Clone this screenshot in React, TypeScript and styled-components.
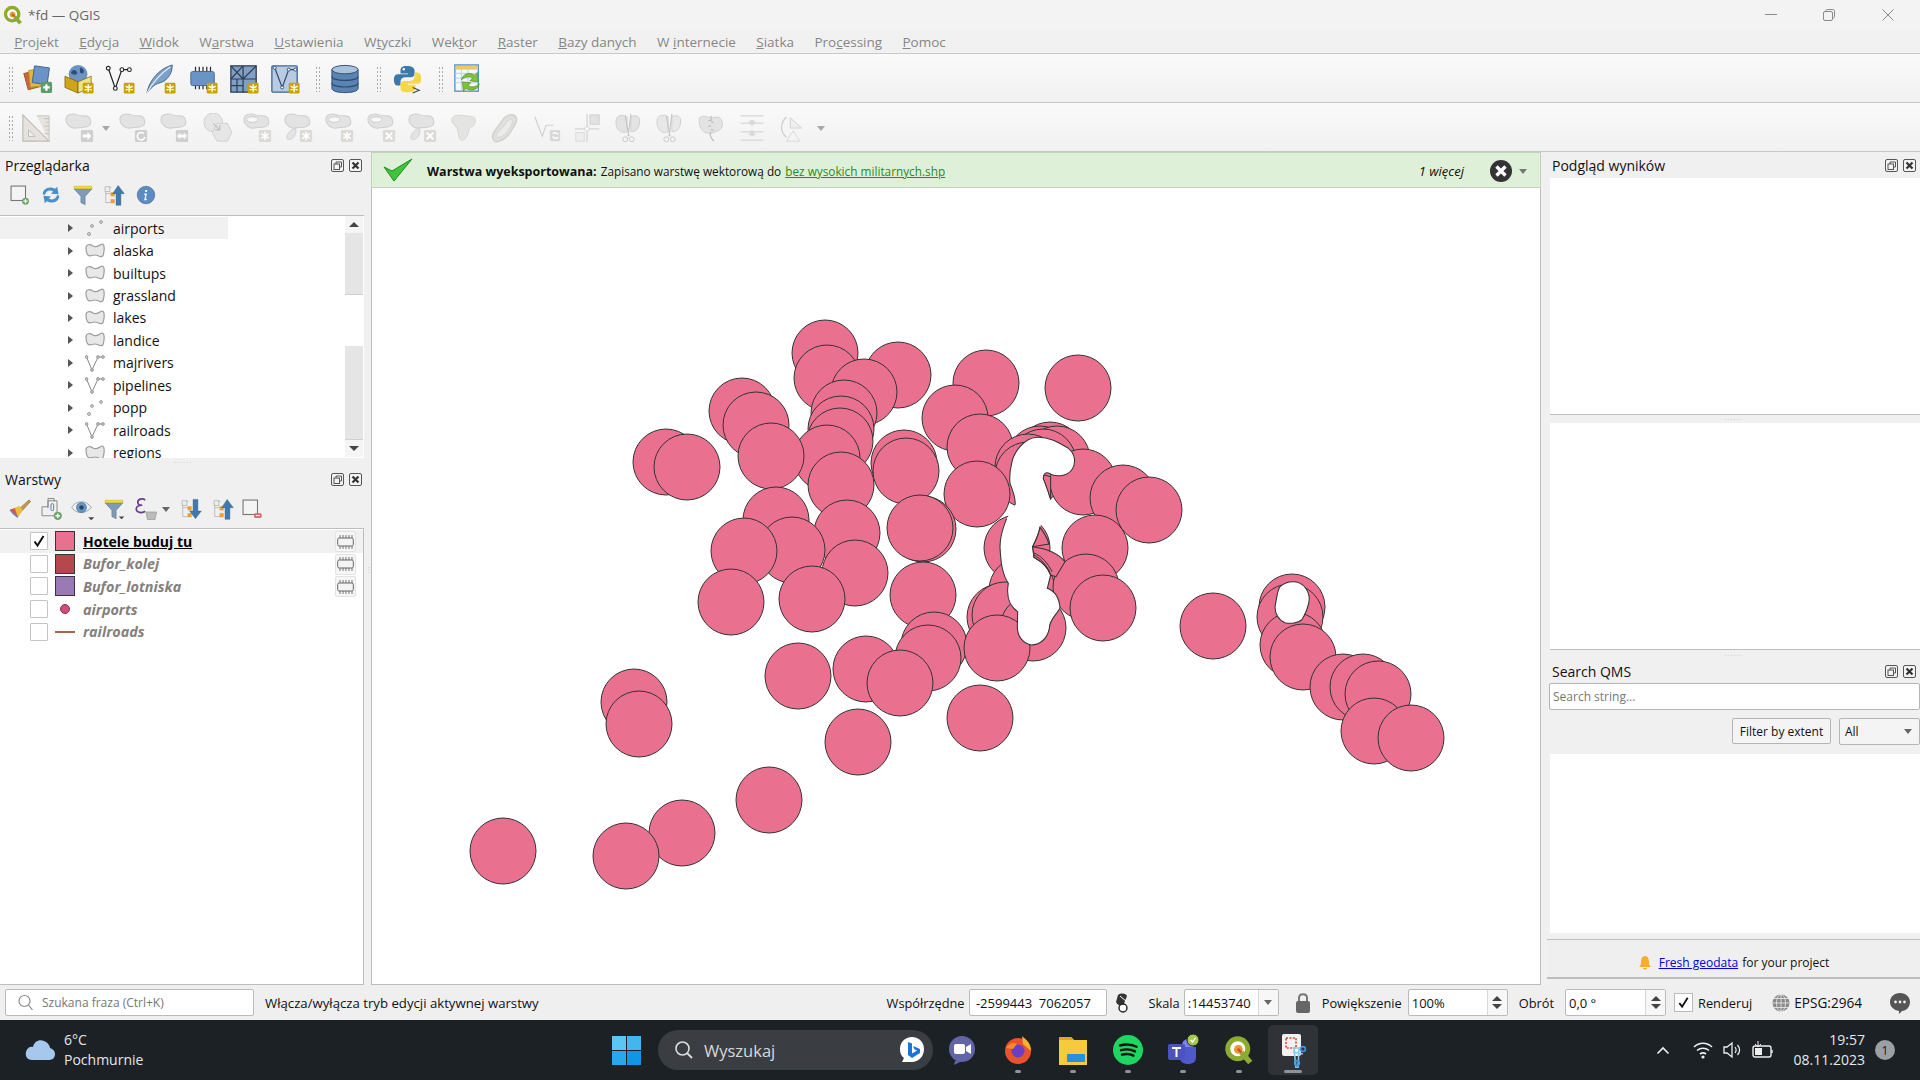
import React from "react";
import styled, { createGlobalStyle } from "styled-components";

const Global = createGlobalStyle`
  html, body { margin: 0; padding: 0; background: #f0f0f0; overflow: hidden; }
  * { box-sizing: border-box; }
  #root { width: 1920px; height: 1080px; }
`;

const Screen = styled.div`
  width: 1920px; height: 1080px; display: flex; flex-direction: column; overflow: hidden;
  font-family: "Open Sans", "Noto Sans", sans-serif; font-size: 13.5px; color: #111; background: #f0f0f0;
`;
const TitleBar = styled.div`
  height: 30px; flex: none; display: flex; align-items: center; background: #f3f3f3; padding-left: 3px; position: relative;
`;
const TitleText = styled.span` margin-left: 5px; font-size: 13.5px; color: #666; `;
const WinControls = styled.div` margin-left: auto; padding-right: 3px; display: flex; `;
const WinBtn = styled.div` width: 58.5px; height: 30px; display: flex; align-items: center; justify-content: center; `;
const MenuBar = styled.div`
  height: 24px; flex: none; display: flex; align-items: center; padding-left: 4px; background: #f1f1f1; border-bottom: 1px solid #c9c9c9;
`;
const MenuItem = styled.span` padding: 0 10.2px; color: #868686; font-size: 13.5px; white-space: nowrap; `;
const Toolbar = styled.div<{ $h: number; $top?: number }>`
  height: ${p => p.$h}px; flex: none; display: flex; align-items: center; padding-left: 4px; padding-top: ${p => p.$top ?? 0}px;
  background: linear-gradient(#fafafa, #f1f1f1); border-bottom: 1px solid #c6c6c6;
`;
const Handle = styled.div<{ $l?: number; $r?: number }>`
  width: 5px; height: 26px; flex: none; margin: 0 ${p => p.$r ?? 4}px 0 ${p => p.$l ?? 4}px;
  background-image: radial-gradient(circle, #aaa 0.8px, transparent 1px); background-size: 3px 4px;
`;
const Slot = styled.div<{ $w?: number }>`
  width: ${p => p.$w ?? 41.25}px; height: 34px; flex: none; display: flex; align-items: center; justify-content: center;
`;
const Arrow = styled.div<{ $c?: string; $ml?: number; $mr?: number }>`
  width: 0; height: 0; flex: none; margin-left: ${p => p.$ml ?? 0}px; margin-right: ${p => p.$mr ?? 0}px;
  border-left: 4.5px solid transparent; border-right: 4.5px solid transparent; border-top: 5px solid ${p => p.$c ?? "#666"};
`;
const Main = styled.div` flex: 1; min-height: 0; display: flex; `;
const LeftDock = styled.div` width: 366px; flex: none; display: flex; flex-direction: column; `;
const DockHeader = styled.div<{ $h?: number }>`
  height: ${p => p.$h ?? 26}px; flex: none; display: flex; align-items: center; justify-content: space-between; padding: 0 4px 0 5px; font-size: 14px;
`;
const DockBtns = styled.div` display: flex; gap: 5px; `;
const DockTools = styled.div<{ $h: number; $bottom: number }>`
  height: ${p => p.$h}px; flex: none; display: flex; align-items: center; padding-left: 4px; padding-bottom: ${p => p.$bottom}px;
`;
const ToolSlot = styled.div<{ $w?: number }>`
  width: ${p => p.$w ?? 31.5}px; height: 28px; flex: none; display: flex; align-items: center; justify-content: center;
`;
const BrowserPane = styled.div`
  height: 243px; flex: none; background: #fff; border-top: 1px solid #bdbdbd; display: flex; position: relative; width: 364px; overflow: hidden;
`;
const TreeList = styled.div` flex: 1; overflow: hidden; padding-top: 1px; `;
const TreeRow = styled.div<{ $sel?: boolean }>`
  height: 22.45px; width: 228px; display: flex; align-items: center; padding-left: 68px; font-size: 14px; background: ${p => p.$sel ? "#f1f1f1" : "transparent"};
`;
const TreeArrow = styled.div`
  width: 0; height: 0; flex: none; border-top: 4.5px solid transparent; border-bottom: 4.5px solid transparent; border-left: 5px solid #555; margin-right: 12px;
`;
const TreeLabel = styled.span` margin-left: 8px; `;
const ScrollBar = styled.div` width: 18px; flex: none; display: flex; flex-direction: column; background: #fff; margin-right: 1px; `;
const ScrollBtn = styled.div` height: 17px; flex: none; display: flex; align-items: center; justify-content: center; background: #f5f5f5; `;
const ScrollUp = styled.div` width: 0; height: 0; border-left: 5px solid transparent; border-right: 5px solid transparent; border-bottom: 5px solid #444; `;
const ScrollDown = styled.div` width: 0; height: 0; border-left: 5px solid transparent; border-right: 5px solid transparent; border-top: 5px solid #444; `;
const ScrollThumb = styled.div<{ $h: number; $on?: boolean }>`
  height: ${p => p.$h}px; flex: none; background: ${p => p.$on ? "#e5e5e5" : "#fff"}; border-bottom: 1px solid ${p => p.$on ? "#d0d0d0" : "#e4e4e4"};
`;
const HSplit = styled.div<{ $h: number }>`
  height: ${p => p.$h}px; flex: none; display: flex; align-items: center; justify-content: center;
  color: #bbb; font-size: 8px; letter-spacing: 1px; line-height: 1;
`;
const LayerPane = styled.div`
  flex: 1; background: #fff; border-top: 1px solid #bdbdbd; border-right: 1px solid #bdbdbd; border-bottom: 1px solid #bdbdbd; width: 364px; padding-top: 1px;
`;
const LayerRow = styled.div<{ $sel?: boolean }>`
  height: 22.6px; display: flex; align-items: center; padding-left: 30px; position: relative; background: ${p => p.$sel ? "#f1f1f1" : "transparent"};
`;
const Check = styled.div`
  width: 18px; height: 18px; flex: none; background: #fff; border: 1px solid #c4c4c4; border-radius: 1px; display: flex; align-items: center; justify-content: center;
`;
const SwatchBox = styled.div`
  width: 20px; flex: none; margin-left: 7px; display: flex; align-items: center; justify-content: center; height: 20px;
`;
const Swatch = styled.div<{ $c: string }>` width: 20px; height: 20px; background: ${p => p.$c}; border: 1px solid #35353f; `;
const Dot = styled.div` width: 10px; height: 10px; border-radius: 50%; background: #d84a78; border: 1px solid #7a3a55; `;
const LineSym = styled.div` width: 20px; height: 2px; background: #a0664a; `;
const LayerName = styled.span<{ $on?: boolean }>`
  margin-left: 8px; font-size: ${p => p.$on ? 14 : 14.4}px; font-weight: 700; font-style: ${p => p.$on ? "normal" : "italic"};
  color: ${p => p.$on ? "#000" : "#85807c"}; text-decoration: ${p => p.$on ? "underline" : "none"};
`;
const IndBtn = styled.div`
  position: absolute; right: 7px; top: 1px; width: 21px; height: 21px; background: #f6f6f6; border: 1px solid #e3e3e3; border-radius: 2px;
  display: flex; align-items: center; justify-content: center;
`;
const VSplit = styled.div<{ $w: number }>`
  width: ${p => p.$w}px; flex: none; display: flex; align-items: center; justify-content: center; color: #c4c4c4; font-size: 8px;
`;
const Center = styled.div` width: 1170px; flex: none; display: flex; flex-direction: column; `;
const Notif = styled.div`
  height: 36px; flex: none; background: #dff0d8; border: 1px solid #c3d3bc; display: flex; align-items: center; padding: 2px 0 0 11px; font-size: 11.8px;
`;
const NotifStrong = styled.b` margin-left: 14px; font-weight: 700; font-size: 12.5px; color: #111; `;
const NotifText = styled.span` margin-left: 4px; color: #111; `;
const NotifLink = styled.a` margin-left: 4px; color: #2d8a18; text-decoration: underline; `;
const NotifMore = styled.i` margin-left: auto; font-size: 13px; color: #111; `;
const NotifClose = styled.div` margin-left: 26px; margin-right: 13px; display: flex; align-items: center; `;
const NotifCheck = styled.div` display: flex; margin-top: -2px; `;
const MapPane = styled.div` flex: 1; background: #fff; border: 1px solid #bdbdbd; border-top: none; min-height: 0; overflow: hidden; `;
const RightDock = styled.div` flex: 1; min-width: 0; display: flex; flex-direction: column; `;
const WhitePane = styled.div<{ $h: number; $border?: boolean; $mt?: number }>`
  height: ${p => p.$h}px; flex: none; background: #fff; margin-left: 3px; margin-top: ${p => p.$mt ?? 0}px; border-bottom: ${p => p.$border ? "1px solid #bdbdbd" : "none"};
`;
const QmsInput = styled.div`
  height: 27px; flex: none; margin-left: 2px; background: #fff; border: 1px solid #b5b5b5; border-radius: 2px; color: #777; font-size: 12px; display: flex; align-items: center; padding-left: 3px;
`;
const QmsRow = styled.div` height: 27px; flex: none; margin-top: 8px; display: flex; justify-content: flex-end; `;
const QmsBtn = styled.div`
  width: 99px; height: 26px; border: 1px solid #b5b5b5; border-radius: 2px; background: #f4f4f4; font-size: 12px; display: flex; align-items: center; justify-content: center;
`;
const QmsSelect = styled.div`
  width: 81px; height: 27px; margin-left: 8px; border: 1px solid #b5b5b5; border-radius: 2px; background: #f4f4f4; font-size: 12px; display: flex; align-items: center; justify-content: space-between; padding: 0 7px 0 5px;
`;
const FreshBar = styled.div`
  height: 40px; flex: none; margin-top: 6px; border-top: 1px solid #bdbdbd; border-bottom: 2px solid #bdbdbd; background: #efefef; display: flex; align-items: center; justify-content: center; font-size: 12px; padding-top: 8px;
`;
const FreshLink = styled.a` color: #0000ee; text-decoration: underline; margin: 0 4px 0 7px; `;
const StatusBar = styled.div` height: 35px; flex: none; display: flex; align-items: center; background: #efefef; padding: 0 9px 0 5px; font-size: 12.8px; `;
const SearchBox = styled.div`
  width: 249px; height: 27px; flex: none; background: #fff; border: 1px solid #bbb; border-radius: 2px; display: flex; align-items: center; padding-left: 11px; color: #777; font-size: 12px; gap: 7px;
`;
const StatusMsg = styled.span` margin-left: 11px; flex: 1; white-space: nowrap; font-size: 13.2px; `;
const StatusLabel = styled.span<{ $ml?: number; $big?: boolean }>` margin-left: ${p => p.$ml ?? 0}px; white-space: nowrap; font-size: ${p => p.$big ? 13.6 : 12.8}px; `;
const StatusField = styled.div<{ $w: number; $ml?: number }>`
  width: ${p => p.$w}px; height: 27px; flex: none; margin-left: ${p => p.$ml ?? 4}px; background: #fff; border: 1px solid #bbb; border-radius: 2px;
  display: flex; align-items: center; padding-left: 3px; white-space: nowrap; overflow: hidden; position: relative; font-size: 13px;
`;
const FieldBtn = styled.div`
  margin-left: auto; width: 20px; height: 100%; flex: none; border-left: 1px solid #d8d8d8; display: flex; flex-direction: column; align-items: center; justify-content: center; gap: 3px; background: #f7f7f7;
`;
const SmallCheck = styled.div<{ $ml: number }>`
  width: 19px; height: 19px; flex: none; margin-left: ${p => p.$ml}px; background: #fff; border: 1px solid #bbb; display: flex; align-items: center; justify-content: center;
`;
const StatusIcon = styled.div<{ $ml: number }>` margin-left: ${p => p.$ml}px; flex: none; display: flex; align-items: center; `;
const Taskbar = styled.div`
  height: 60px; flex: none; background: #1c2126; display: flex; align-items: center; color: #f1f1f1; position: relative; font-size: 14px;
`;
const Weather = styled.div` display: flex; align-items: center; margin-left: 25px; width: 587px; gap: 9px; `;
const WeatherText = styled.div` display: flex; flex-direction: column; line-height: 20px; color: #e6e6e6; font-size: 14px; `;
const TaskSearch = styled.div`
  width: 275px; height: 40px; flex: none; margin-left: 17px; background: #3a3e43; border-radius: 20px; display: flex; align-items: center; padding: 0 8px 0 16px; gap: 10px; font-size: 16.5px; color: #d8d8d8;
`;
const BingWrap = styled.div` margin-left: auto; display: flex; `;
const TaskApp = styled.div<{ $active?: boolean; $w?: number; $ml?: number }>`
  width: ${p => p.$w ?? 55.2}px; height: 50px; flex: none; display: flex; align-items: center; justify-content: center; position: relative; border-radius: 5px;
  margin-left: ${p => p.$ml ?? 0}px; background: ${p => p.$active ? "#2f3337" : "transparent"};
`;
const RunDot = styled.div<{ $active?: boolean }>`
  position: absolute; bottom: 2px; left: 50%; transform: translateX(-50%); height: 3px; border-radius: 2px; width: ${p => p.$active ? 18 : 6}px; background: #8f9296;
`;
const Tray = styled.div` margin-left: auto; display: flex; align-items: center; `;
const TrayIcon = styled.div<{ $w: number }>` width: ${p => p.$w}px; flex: none; display: flex; justify-content: center; `;
const Clock = styled.div` display: flex; flex-direction: column; align-items: flex-end; line-height: 20px; font-size: 14px; margin-left: 12px; color: #e8e8e8; `;
const Notify = styled.div`
  width: 20px; height: 20px; border-radius: 50%; background: #9aa0a4; color: #1c2126; font-size: 12px; display: flex; align-items: center; justify-content: center; margin: 0 25px 0 10px;
`;

const Svg = ({ s = 30, v = 32, children }: { s?: number; v?: number; children: React.ReactNode }) => (
  <svg width={s} height={s} viewBox={`0 0 ${v} ${v}`} style={{ display: "block", flex: "none" }}>{children}</svg>
);

const StarBadge = ({ x = 20, y = 20 }: { x?: number; y?: number }) => (
  <g transform={`translate(${x} ${y})`}>
    <rect width="11.5" height="11.5" rx="1.5" fill="#c9a200" />
    <g stroke="#fff" strokeWidth="1.5" strokeLinecap="round">
      <path d="M5.75 2v7.5M2.5 3.9l6.5 3.7M2.5 7.6L9 3.9" />
    </g>
  </g>
);

const DataSource = () => (
  <Svg>
    <rect x="3" y="8" width="15" height="18" fill="#c8683a" stroke="#a65530" transform="rotate(-15 10 17)" />
    <rect x="7" y="6" width="15" height="18" fill="#e6b63c" stroke="#c39a2e" transform="rotate(-6 14 15)" />
    <rect x="11" y="3" width="16" height="18" fill="#6a94c6" stroke="#3f6692" transform="rotate(8 19 12)" />
    <rect x="19" y="19" width="12" height="12" rx="2" fill="#5f9b6a" />
    <path d="M25 21.5v7M21.5 25h7" stroke="#fff" strokeWidth="2.4" />
  </Svg>
);
const NewGpkg = () => (
  <Svg>
    <circle cx="15" cy="11" r="10" fill="#6d93c4" />
    <path d="M8 8c3-3 5-1 6 1s-3 3-5 2-2-2-1-3zM17 4c3 0 5 3 4 5s-4 1-4-1 0-3 0-4z" fill="#2d4f79" />
    <path d="M1 13l14 6v12L1 25z" fill="#d0a515" stroke="#6b5800" strokeWidth=".7" />
    <path d="M15 19l14-6v12l-14 6z" fill="#ede37f" stroke="#6b5800" strokeWidth=".7" />
    <StarBadge x={20} y={20} />
  </Svg>
);
const NewShp = () => (
  <Svg>
    <path d="M3.5 4.5L11 26L18 6h8" fill="none" stroke="#222" strokeWidth="1.3" />
    <g fill="#fff" stroke="#222" strokeWidth="1.2"><circle cx="3.5" cy="4.5" r="2" /><circle cx="11" cy="26" r="2" /><circle cx="18" cy="6" r="2" /><circle cx="26" cy="6" r="2" /></g>
    <StarBadge />
  </Svg>
);
const Feather = () => (
  <Svg>
    <path d="M1 31C3 18 14 5 28 1c0 8-3 12-7 16-3 3-8 3-11 5-3 2-6 5-9 9z" fill="#7e9fc8" stroke="#3f6692" />
    <path d="M1 31C7 20 16 10 26 3" stroke="#e8eef5" fill="none" strokeWidth="1.2" />
    <StarBadge />
  </Svg>
);
const Chip = () => (
  <Svg>
    <path d="M8 3v5M12 3v5M16 3v5M20 3v5M24 3v5M8 22v5M12 22v5M16 22v5M20 22v5" stroke="#2a2a2a" strokeWidth="1.3" />
    <rect x="3" y="8" width="25" height="15" rx="2" fill="#6a94c6" stroke="#3f6692" />
    <StarBadge />
  </Svg>
);
const Mesh = () => (
  <Svg>
    <rect x="2" y="2" width="27" height="28" fill="#7f9fc6" stroke="#2f3e52" strokeWidth="1.4" />
    <path d="M2 16h27M15 2v28M2 2l13 14M15 2l-13 14M15 16L29 2M2 23h13M8.5 16v14" stroke="#2f3e52" strokeWidth="1.3" fill="none" />
    <StarBadge />
  </Svg>
);
const VectorTile = () => (
  <Svg>
    <rect x="2" y="2" width="27" height="28" rx="1" fill="#b8cbe2" stroke="#3f6692" strokeWidth="1.4" />
    <path d="M5 4l8 21 7-19h7" fill="none" stroke="#2f4d72" strokeWidth="1.3" />
    <g fill="#fff" stroke="#2f4d72"><circle cx="5" cy="4" r="1.6" /><circle cx="13" cy="25" r="1.6" /><circle cx="20" cy="6" r="1.6" /><circle cx="27" cy="6" r="1.6" /></g>
    <StarBadge />
  </Svg>
);
const Database = () => (
  <Svg>
    <path d="M2 6v20c0 6 28 6 28 0V6z" fill="#5a83b2" stroke="#2f4d72" />
    <ellipse cx="16" cy="6" rx="14" ry="4.5" fill="#a8c2dd" stroke="#2f4d72" />
    <path d="M2 13c0 6 28 6 28 0M2 20c0 6 28 6 28 0" fill="none" stroke="#2f4d72" strokeWidth="1.2" />
  </Svg>
);
const Python = () => (
  <Svg>
    <path d="M15 2c-6 0-7 2-7 5v3h8v1H5c-3 0-4 3-4 6s1 6 4 6h3v-4c0-3 2-5 5-5h6c3 0 4-2 4-4V7c0-3-3-5-8-5z" fill="#3c78a8" />
    <path d="M16 30c6 0 8-2 8-5v-3h-8v-1h11c3 0 3-3 3-6s-1-6-4-6h-3v4c0 3-2 5-5 5h-6c-3 0-4 2-4 4v4c0 3 3 4 8 4z" fill="#f7d74a" />
    <circle cx="11.5" cy="5.5" r="1.3" fill="#fff" />
    <path d="M21 25l7 3-7 3" fill="none" stroke="#444" strokeWidth="1.2" />
  </Svg>
);
const TableSync = () => (
  <Svg>
    <rect x="2" y="1" width="25" height="28" fill="#f4f7fb" stroke="#4a90c8" strokeWidth="1.4" />
    <rect x="3" y="2" width="23" height="4" fill="#f0c56a" />
    <path d="M2 10h25M2 15h25M2 20h25M9 6v23M16 6v23" stroke="#bcd0e2" />
    <path d="M9 17c1-6 8-9 14-5l3-3 1 10-9-1 3-3c-3-2-8-2-12 2zM28 21c-1 6-8 9-14 5l-3 3-1-10 9 1-3 3c3 2 8 2 12-2z" fill="#7cc23a" stroke="#4e8e1e" strokeWidth=".7" />
  </Svg>
);

const Ruler = () => (
  <Svg>
    <path d="M2 2l28 28H2z" fill="#e6e3df" stroke="#bdbab6" strokeWidth="1.2" />
    <path d="M8 18l7 7H8z" fill="#f2f0ee" stroke="#bdbab6" />
    <path d="M17 3h13v27" fill="#e6e3df" stroke="#c8c5c1" />
    <path d="M25 6h5M27 10h3M25 14h5M27 18h3M25 22h5" stroke="#c0bdb9" />
  </Svg>
);
const BLOB = "M1 7C1 1 8 0 13 2s9 0 12 2 4 8 0 10-9 1-13 2S1 13 1 7z";
type Ov = "arrow" | "rotate" | "both" | "plus" | "x" | "none";
const Overlay = ({ k, x = 17, y = 18 }: { k: Ov; x?: number; y?: number }) => {
  if (k === "none") return null;
  const col = k === "plus" || k === "x" ? "#dcdad6" : "#cfcfcf";
  return (
    <g transform={`translate(${x} ${y})`}>
      <rect width="13" height="13" rx="1.5" fill={col} />
      {k === "arrow" && <path d="M2 5h5V2l4 4.5L7 11V8H2z" fill="#fff" />}
      {k === "rotate" && <path d="M9.5 4A4 4 0 1 0 10.5 7.5" fill="none" stroke="#fff" strokeWidth="1.6" />}
      {k === "both" && <path d="M1 6.5L4.5 3v2h4V3L12 6.5 8.5 10V8h-4v2z" fill="#fff" />}
      {k === "plus" && <path d="M6.5 2v9M2.5 4l8 5M2.5 9l8-5" stroke="#fff" strokeWidth="1.6" />}
      {k === "x" && <path d="M3 3l7 7M10 3l-7 7" stroke="#fff" strokeWidth="2" />}
    </g>
  );
};
const Poly = ({ o, hole, part }: { o: Ov; hole?: boolean; part?: boolean }) => (
  <Svg>
    <path d={BLOB} fill="#e3e3e3" stroke="#cfcfcf" strokeWidth="1.1" />
    {hole && <ellipse cx="10" cy="7" rx="6" ry="3" fill="#f8f8f8" stroke="#c9c9c9" />}
    {part && <path d="M3 26c0-4 5-9 9-10 2 3 0 9-3 11s-6 2-6-1z" fill="#e3e3e3" stroke="#cfcfcf" />}
    <Overlay k={o} />
  </Svg>
);
const OffsetShape = () => (
  <Svg>
    <circle cx="12" cy="10" r="10" fill="#e6e6e6" stroke="#cfcfcf" />
    <path d="M18 11h11l5 10-5 9H18l-5-9z" transform="translate(-2 0)" fill="#e6e6e6" stroke="#cfcfcf" />
    <path d="M12 11l7 7m0-5v5h-5" fill="none" stroke="#c0c0c0" strokeWidth="1.2" />
  </Svg>
);
const FillRing = () => (
  <Svg>
    <path d="M3 8C3 1 12 2 18 3s10 0 10 5-3 7-5 7-1 5-4 10-7 5-8 2-1-10-4-13-4-4-4-6z" fill="#e4e4e2" stroke="#d4d4d0" />
  </Svg>
);
const Reshape = () => (
  <Svg>
    <path d="M3 27C1 21 9 15 13 8s13-8 15-3-3 10-6 15-7 8-12 10-6 0-7-3z" fill="#e0e0de" stroke="#cfcfcb" strokeWidth="1.4" />
    <path d="M6 25c2-5 8-9 11-14s7-5 7-2-3 7-6 11-9 8-12 5z" fill="#ececea" stroke="#d4d4d0" />
  </Svg>
);
const OffsetCurve = () => (
  <Svg>
    <path d="M3 4l8 21 4-12h8" fill="none" stroke="#cfcfcf" strokeWidth="1.2" />
    <rect x="19" y="18" width="11" height="12" rx="1.5" fill="#d8d8d8" />
    <path d="M22 22a4 4 0 0 1 6 1M28 26a4 4 0 0 1-6-1" stroke="#fff" fill="none" strokeWidth="1.4" />
  </Svg>
);
const SplitNodes = () => (
  <Svg>
    <path d="M15 1v30M2 17h26" stroke="#d6d6d6" strokeWidth="1.4" />
    <rect x="18" y="2" width="10" height="10" fill="#e2e2e2" stroke="#d0d0d0" />
    <rect x="3" y="21" width="9" height="9" fill="#eee" stroke="#d8d8d8" />
    <circle cx="15" cy="17" r="2.5" fill="#fff" stroke="#d0d0d0" />
  </Svg>
);
const Scissors = ({ fill = "#e3e3e3" }: { fill?: string }) => (
  <Svg>
    <path d="M4 4c4-3 8-1 10 0v16c-4 2-8 0-10-3S1 7 4 4zM18 4c4-2 8-1 9 2s0 10-3 12-5 2-6 2z" fill={fill} stroke="#cfcfcf" />
    <path d="M18 1l-3 24M12 3l4 22" stroke="#c6c6c6" strokeWidth="1.2" />
    <circle cx="12" cy="28" r="2.6" fill="none" stroke="#c6c6c6" />
    <circle cx="19" cy="28" r="2.6" fill="none" stroke="#c6c6c6" />
  </Svg>
);
const SplitLine = () => (
  <Svg>
    <path d="M3 5c4-3 8-1 11 0s7-2 10 0 4 8 2 11-6 4-9 5-8 1-11-2-5-11-3-14z" fill="#e3e3e3" stroke="#cfcfcf" />
    <path d="M15 3v5h-3M15 10h3M15 14h-3M15 18h3M15 20c-2 3 0 7 3 10" stroke="#bdbdbd" fill="none" strokeWidth="1.2" />
  </Svg>
);
const Align = () => (
  <Svg>
    <path d="M3 3h24M3 11h24M3 20h24M3 29h24" stroke="#dcdcdc" strokeWidth="1.5" />
    <path d="M15 7l-5 3h3v3h4v-3h3zM15 25l-5-3h3v-3h4v3h3z" fill="#d8d8d8" />
  </Svg>
);
const Rotate = () => (
  <Svg>
    <path d="M12 5l12 11-12 0z" fill="#efefef" stroke="#d0d0d0" />
    <path d="M8 4c-7 7-7 16 0 22" fill="none" stroke="#cfcfcf" strokeWidth="1.4" />
    <path d="M15 19L8 30h14z" fill="#f4f4f4" stroke="#d8d8d8" />
  </Svg>
);

const DockGlyphs = () => (
  <DockBtns>
    <svg width="13" height="13" viewBox="0 0 13 13"><rect x=".5" y=".5" width="12" height="12" rx="1.5" fill="#f3f3f3" stroke="#555" /><rect x="3" y="5" width="5.5" height="5.5" fill="none" stroke="#555" /><path d="M5 5V3h5.5v5H8.5" fill="none" stroke="#555" /></svg>
    <svg width="13" height="13" viewBox="0 0 13 13"><rect x=".5" y=".5" width="12" height="12" rx="1.5" fill="#f3f3f3" stroke="#555" /><path d="M3.5 3.5l6 6M9.5 3.5l-6 6" stroke="#333" strokeWidth="2.2" /></svg>
  </DockBtns>
);

const AddGroup = ({ red }: { red?: boolean }) => (
  <Svg s={22}>
    <rect x="3" y="3" width="21" height="21" fill="#f4f4f4" stroke="#777" strokeWidth="1.6" />
    {red
      ? <rect x="19" y="22" width="11" height="7" rx="2" fill="#e8606a" />
      : <circle cx="24" cy="25" r="5" fill="#6aa66a" />}
    <path d={red ? "M21.5 25.5h6" : "M24 22v6M21 25h6"} stroke="#fff" strokeWidth="1.7" />
  </Svg>
);
const Refresh = () => (
  <Svg s={22}>
    <path d="M4 15C4 7 13 2 22 7l3-3 2 11-11-1 3-3c-5-3-10-1-12 5z" fill="#4a90c8" />
    <path d="M28 17c0 8-9 13-18 8l-3 3-2-11 11 1-3 3c5 3 10 1 12-5z" fill="#4a90c8" />
  </Svg>
);
const Funnel = ({ mini }: { mini?: boolean }) => (
  <Svg s={22}>
    <path d="M3 7h26L19 18v12l-6-3v-9z" fill="#7f9bb5" stroke="#5e7e98" />
    <rect x="3" y="3" width="26" height="4" fill="#f2d84a" stroke="#c8ae2a" strokeWidth=".6" />
    {mini && <path d="M23 27h8l-4 4z" fill="#444" />}
  </Svg>
);
const TreeArrowIcon = ({ down }: { down?: boolean }) => (
  <Svg s={22}>
    <path d="M4 5h8M4 5v22h8M4 14h8" stroke="#aaa" fill="none" />
    <rect x="3" y="4" width="7" height="7" fill="#eee" stroke="#aaa" />
    <rect x="11" y="12" width="6" height="6" fill="#f0a030" />
    <rect x="11" y="22" width="6" height="6" fill="#f0a030" />
    <path d={down ? "M19 2h7v17h5L22.5 30 14 19h5z" : "M22 2l9 12h-5v17h-7V14h-5z"} fill="#3f79ae" stroke="#2f5d88" strokeWidth=".6" />
  </Svg>
);
const Info = () => (
  <Svg s={20}>
    <circle cx="16" cy="16" r="14" fill="#5b8cc2" stroke="#3f6692" />
    <path d="M15 8h3l-.6 3h-3zM13.5 13.5h4L15.5 22h2l-.5 2.5h-4l2-8.5h-2z" fill="#fff" />
  </Svg>
);
const Brush = () => (
  <Svg s={24}>
    <path d="M16 15L28 4l2 2-11 12z" fill="#c89a5a" stroke="#8a6838" />
    <path d="M3 17l12-5 5 6-7 9z" fill="#e8c040" />
    <path d="M3 17l6-2.5 3 9 1 3.5z" fill="#e85040" />
    <path d="M3 17l4 5 6 5" fill="#5a80c8" stroke="#5a80c8" strokeWidth="2" />
  </Svg>
);
const AddLayerGroup = () => (
  <Svg s={24}>
    <path d="M4 13h8V5h12v20H4z" fill="#f0f0f0" stroke="#888" strokeWidth="1.3" />
    <path d="M12 15V2h8v4" fill="none" stroke="#888" strokeWidth="1.3" />
    <rect x="16" y="9" width="3.5" height="9" rx="1" fill="none" stroke="#5a7ea8" strokeWidth="1.3" />
    <circle cx="25" cy="25" r="5.5" fill="#6aa66a" />
    <path d="M25 22v6M22 25h6" stroke="#fff" strokeWidth="1.7" />
  </Svg>
);
const Eye = () => (
  <Svg s={24}>
    <path d="M1 14C6 5 20 3 27 14 20 23 7 23 1 14z" fill="#eef2f6" stroke="#7d8d9c" />
    <circle cx="14" cy="14" r="6.5" fill="#6a9ac8" stroke="#3f6692" />
    <circle cx="14" cy="14" r="3" fill="#28486a" />
    <path d="M23 27h8l-4 4z" fill="#444" />
  </Svg>
);
const Expr = () => (
  <Svg s={24}>
    <path d="M15 4c-4-3-10-1-10 3 0 3 3 4 6 4-4 0-8 1-8 5 0 5 8 6 12 3" fill="none" stroke="#6a3f8a" strokeWidth="2.2" />
    <path d="M16 20h14l-2 10H18z" fill="#bcbcbc" stroke="#9a9a9a" />
  </Svg>
);

const TreePoly = () => (
  <svg width="20" height="16" viewBox="0 0 20 16"><path d="M1 5C1 1 5 1 8 3S13 3 16 1.5 19.5 4 19 8 18 14.5 15 13.5 11 11 7 12.5 1 11 1 5z" fill="#e8e8e8" stroke="#9c9c9c" strokeWidth="1.2" /></svg>
);
const TreeLine = () => (
  <svg width="20" height="18" viewBox="0 0 20 18"><path d="M1.5 3L7 16 13 3h5" fill="none" stroke="#888" /><g fill="#ccc" stroke="#888" strokeWidth=".8"><circle cx="1.5" cy="3" r="1.4" /><circle cx="7" cy="16" r="1.4" /><circle cx="13" cy="3" r="1.4" /><circle cx="18" cy="3" r="1.4" /></g></svg>
);
const TreePoints = () => (
  <svg width="20" height="18" viewBox="0 0 20 18"><g fill="#ddd" stroke="#888" strokeWidth=".8"><circle cx="4" cy="15" r="1.5" /><circle cx="7" cy="7" r="1.4" /><circle cx="16" cy="3" r="1.4" /></g></svg>
);

const Chip16 = () => (
  <svg width="17" height="14" viewBox="0 0 17 14">
    <path d="M3 0v3M6 0v3M9 0v3M12 0v3M15 0v3M3 11v3M6 11v3M9 11v3M12 11v3M15 11v3" stroke="#777" />
    <rect x=".7" y="3" width="15.6" height="8" rx="1.5" fill="#f4f4f4" stroke="#666" />
  </svg>
);
const Tick = ({ s = 14 }: { s?: number }) => (
  <svg width={s} height={s} viewBox="0 0 14 14"><path d="M2.5 7.5L5.5 11.5 11.5 2" fill="none" stroke="#111" strokeWidth="2" /></svg>
);
const Spin = () => (
  <FieldBtn>
    <ScrollUp />
    <ScrollDown />
  </FieldBtn>
);

const raw: [number, number][] = [
  [825,353],[898,375],[827,378],[864,392],[986,383],[1078,388],[742,411],[756,425],[844,413],[841,429],[840,441],
  [955,418],[980,447],[1050,455],[1040,459],[1057,459],[1043,462],[1028,467],[1028,475],
  [904,463],[827,458],[771,456],[666,462],[687,467],[906,471],[841,485],[977,494],
  [776,520],[847,533],[923,529],[920,528],[792,550],[744,551],[855,573],[731,602],[812,599],[923,595],
  [1083,482],[1123,498],[1149,510],[1095,548],
  [1032,580],[1017,548],[1022,590],[1000,617],[1005,615],[1033,628],
  [1086,587],[1103,608],
  [934,645],[928,658],[866,669],[900,683],[997,648],[798,676],[634,702],[639,724],[858,742],[980,718],
  [769,800],[682,833],[626,856],[503,851],[1213,626],
  [1292,607],[1290,617],[1293,645],[1303,657],[1343,687],[1363,687],[1378,694],[1374,731],[1411,738],
];
const PINK = "#e9718f";
const EDGE = "#333333";
const A_SEG = "M165 255C168 240 160 215 150 190C148 170 150 150 155 130C160 100 190 55 230 52C270 50 300 70 325 85C345 100 350 130 335 150C320 170 285 172 268 160C258 155 250 160 250 175C258 195 265 215 272 238";
const B_SEG = "M240 322C236 345 228 360 218 380L222 412C245 425 265 445 272 465L262 505C280 512 298 530 300 565C285 590 268 600 268 625C262 660 235 675 215 675C190 672 172 650 172 620L173 575C150 560 138 530 145 490C125 460 122 420 120 380C120 345 130 320 140 296";

const MapCanvas = () => (
  <svg width="1168" height="796" viewBox="372 188 1168 796" style={{ display: "block" }}>
    {raw.map(([x, y], i) => <circle key={i} cx={x} cy={y} r="33" fill={PINK} stroke={EDGE} strokeWidth="1" />)}
    <g transform="translate(960 420) scale(.3333)">
      <path d={`${A_SEG}L${B_SEG.slice(1)}Z`} fill="#fff" />
      <path d={A_SEG} fill="none" stroke={EDGE} strokeWidth="3.2" />
      <path d={B_SEG} fill="none" stroke={EDGE} strokeWidth="3.2" />
      <path d="M240 322C250 335 262 355 267 372L218 380C228 360 236 345 240 322Z" fill={PINK} stroke={EDGE} strokeWidth="3.2" />
      <path d="M218 380C255 385 295 400 315 425L288 470L272 465C265 445 245 425 222 412Z" fill={PINK} stroke={EDGE} strokeWidth="3.2" />
      <path d="M220 398C245 408 264 430 276 455M222 405C245 418 262 438 270 460" fill="none" stroke={EDGE} strokeWidth="3" />
      <path d="M252 165L272 170L272 238C265 215 258 195 250 175Z" fill={PINK} stroke={EDGE} strokeWidth="3" />
    </g>
    <g transform="translate(1260 560) scale(.3333)">
      <path d="M100 65C125 65 145 85 148 115C148 135 135 165 125 180C115 190 90 192 75 188C55 180 45 160 45 140C50 120 50 95 60 80C70 70 85 65 100 65Z" fill="#fff" stroke={EDGE} strokeWidth="3.2" />
    </g>
  </svg>
);

const QgisLogo = ({ s = 20 }: { s?: number }) => (
  <svg width={s} height={s} viewBox="0 0 24 24" style={{ display: "block" }}>
    <circle cx="11" cy="11" r="8" fill="#fff" stroke="#8cab30" strokeWidth="4" />
    <path d="M14 14l7 8" stroke="#8cab30" strokeWidth="4.5" />
    <circle cx="11.5" cy="11.5" r="3.5" fill="#e8973a" />
    <path d="M11 11l3 3" stroke="#c65a2a" strokeWidth="2" />
  </svg>
);

const MENU: [string, string, string][] = [
  ["", "P", "rojekt"], ["", "E", "dycja"], ["", "W", "idok"], ["W", "a", "rstwa"], ["", "U", "stawienia"], ["W", "t", "yczki"], ["Wek", "t", "or"],
  ["", "R", "aster"], ["", "B", "azy danych"], ["W ", "i", "nternecie"], ["", "S", "iatka"], ["Pro", "c", "essing"], ["", "P", "omoc"],
];
const TREE: [string, "pt" | "pg" | "ln"][] = [
  ["airports", "pt"], ["alaska", "pg"], ["builtups", "pg"], ["grassland", "pg"], ["lakes", "pg"], ["landice", "pg"],
  ["majrivers", "ln"], ["pipelines", "ln"], ["popp", "pt"], ["railroads", "ln"], ["regions", "pg"],
];
const TOOLBAR2 = [
  <Poly o="rotate" />, <Poly o="both" />, <OffsetShape />, <Poly o="plus" hole />, <Poly o="plus" part />, <Poly o="plus" hole />, <Poly o="x" hole />, <Poly o="x" part />,
  <FillRing />, <Reshape />, <OffsetCurve />, <SplitNodes />, <Scissors />, <Scissors fill="#e8e8e8" />, <SplitLine />, <Align />, <Rotate />,
];

export default function App() {
  return (
    <Screen>
      <Global />
      <TitleBar>
        <QgisLogo />
        <TitleText>*fd — QGIS</TitleText>
        <WinControls>
          <WinBtn><svg width="12" height="2"><rect width="12" height="1" fill="#8a8a8a" /></svg></WinBtn>
          <WinBtn><svg width="12" height="12" viewBox="0 0 12 12"><rect x=".5" y="2.5" width="9" height="9" rx="1.5" fill="none" stroke="#8a8a8a" /><path d="M3 2.5V1.8C3 1 3.5.5 4.3.5H10c.9 0 1.5.6 1.5 1.5v5.7c0 .8-.5 1.3-1.3 1.3" fill="none" stroke="#8a8a8a" /></svg></WinBtn>
          <WinBtn><svg width="12" height="12" viewBox="0 0 12 12"><path d="M.5.5l11 11M11.5.5l-11 11" stroke="#8a8a8a" /></svg></WinBtn>
        </WinControls>
      </TitleBar>
      <MenuBar>
        {MENU.map(([a, b, c]) => <MenuItem key={a + b + c}>{a}<u>{b}</u>{c}</MenuItem>)}
      </MenuBar>
      <Toolbar $h={49} $top={2}>
        <Handle />
        <Slot><DataSource /></Slot><Slot><NewGpkg /></Slot><Slot><NewShp /></Slot><Slot><Feather /></Slot><Slot><Chip /></Slot><Slot><Mesh /></Slot><Slot><VectorTile /></Slot>
        <Handle $l={9} $r={8.5} />
        <Slot $w={33}><Database /></Slot>
        <Handle $l={15} $r={11.5} />
        <Slot $w={30}><Python /></Slot>
        <Handle $l={15.5} $r={8} />
        <Slot $w={33}><TableSync /></Slot>
      </Toolbar>
      <Toolbar $h={49} $top={2}>
        <Handle />
        <Slot $w={37}><Ruler /></Slot>
        <Slot $w={52}><Poly o="arrow" /></Slot>
        <Arrow $c="#a8a8a8" $ml={-4} $mr={3.5} />
        {TOOLBAR2.map((n, i) => <Slot key={i}>{n}</Slot>)}
        <Arrow $c="#a8a8a8" $ml={2} />
      </Toolbar>
      <Main>
        <LeftDock>
          <DockHeader>Przeglądarka<DockGlyphs /></DockHeader>
          <DockTools $h={37} $bottom={4}>
            <ToolSlot><AddGroup /></ToolSlot><ToolSlot><Refresh /></ToolSlot><ToolSlot><Funnel /></ToolSlot><ToolSlot><TreeArrowIcon /></ToolSlot><ToolSlot><Info /></ToolSlot>
          </DockTools>
          <BrowserPane>
            <TreeList>
              {TREE.map(([n, k], i) => (
                <TreeRow key={n} $sel={i === 0}>
                  <TreeArrow />
                  {k === "pt" ? <TreePoints /> : k === "pg" ? <TreePoly /> : <TreeLine />}
                  <TreeLabel>{n}</TreeLabel>
                </TreeRow>
              ))}
            </TreeList>
            <ScrollBar>
              <ScrollBtn><ScrollUp /></ScrollBtn>
              <ScrollThumb $h={62} $on />
              <ScrollThumb $h={52} />
              <ScrollThumb $h={93} $on />
              <ScrollBtn><ScrollDown /></ScrollBtn>
            </ScrollBar>
          </BrowserPane>
          <HSplit $h={8}>······</HSplit>
          <DockHeader>Warstwy<DockGlyphs /></DockHeader>
          <DockTools $h={36} $bottom={2}>
            <ToolSlot><Brush /></ToolSlot><ToolSlot><AddLayerGroup /></ToolSlot><ToolSlot><Eye /></ToolSlot><ToolSlot><Funnel mini /></ToolSlot>
            <ToolSlot $w={32}><Expr /></ToolSlot><Arrow />
            <ToolSlot $w={42}><TreeArrowIcon down /></ToolSlot><ToolSlot $w={21}><TreeArrowIcon /></ToolSlot><ToolSlot $w={38}><AddGroup red /></ToolSlot>
          </DockTools>
          <LayerPane>
            <LayerRow $sel><Check><Tick /></Check><SwatchBox><Swatch $c="#e9718f" /></SwatchBox><LayerName $on>Hotele buduj tu</LayerName><IndBtn><Chip16 /></IndBtn></LayerRow>
            <LayerRow><Check /><SwatchBox><Swatch $c="#b5484f" /></SwatchBox><LayerName>Bufor_kolej</LayerName><IndBtn><Chip16 /></IndBtn></LayerRow>
            <LayerRow><Check /><SwatchBox><Swatch $c="#9a7ab5" /></SwatchBox><LayerName>Bufor_lotniska</LayerName><IndBtn><Chip16 /></IndBtn></LayerRow>
            <LayerRow><Check /><SwatchBox><Dot /></SwatchBox><LayerName>airports</LayerName></LayerRow>
            <LayerRow><Check /><SwatchBox><LineSym /></SwatchBox><LayerName>railroads</LayerName></LayerRow>
          </LayerPane>
        </LeftDock>
        <VSplit $w={5}>⋮</VSplit>
        <Center>
          <Notif>
            <NotifCheck><svg width="30" height="24" viewBox="0 0 30 24"><path d="M1 9l8 4L29 1 11 23z" fill="#3fc43a" stroke="#1f8a1f" /></svg></NotifCheck>
            <NotifStrong>Warstwa wyeksportowana:</NotifStrong>
            <NotifText>Zapisano warstwę wektorową do</NotifText>
            <NotifLink>bez wysokich militarnych.shp</NotifLink>
            <NotifMore>1 więcej</NotifMore>
            <NotifClose>
              <svg width="22" height="22" viewBox="0 0 22 22"><circle cx="11" cy="11" r="11" fill="#333" /><path d="M6.5 6.5l9 9M15.5 6.5l-9 9" stroke="#fff" strokeWidth="3.4" /></svg>
              <Arrow $ml={7} $c="#777" />
            </NotifClose>
          </Notif>
          <MapPane><MapCanvas /></MapPane>
        </Center>
        <VSplit $w={6} />
        <RightDock>
          <DockHeader>Podgląd wyników<DockGlyphs /></DockHeader>
          <WhitePane $h={237} $border />
          <HSplit $h={8}>······</HSplit>
          <WhitePane $h={227} $border />
          <HSplit $h={9}>······</HSplit>
          <DockHeader $h={24}>Search QMS<DockGlyphs /></DockHeader>
          <QmsInput>Search string...</QmsInput>
          <QmsRow>
            <QmsBtn>Filter by extent</QmsBtn>
            <QmsSelect>All<Arrow /></QmsSelect>
          </QmsRow>
          <WhitePane $h={179} $mt={9} />
          <FreshBar>
            <svg width="14" height="16" viewBox="0 0 14 16"><path d="M7 1c3 0 4 3 4 6s1 4 2 5H1c1-1 2-2 2-5s1-6 4-6zM5 13h4c0 2-4 2-4 0z" fill="#f7ae2e" /></svg>
            <FreshLink>Fresh geodata</FreshLink>for your project
          </FreshBar>
        </RightDock>
      </Main>
      <StatusBar>
        <SearchBox>
          <svg width="18" height="18" viewBox="0 0 18 18"><circle cx="7.5" cy="7" r="5.5" fill="none" stroke="#888" strokeWidth="1.2" /><path d="M11.5 11l4 5" stroke="#888" strokeWidth="1.2" /></svg>
          Szukana fraza (Ctrl+K)
        </SearchBox>
        <StatusMsg>Włącza/wyłącza tryb edycji aktywnej warstwy</StatusMsg>
        <StatusLabel>Współrzędne</StatusLabel>
        <StatusField $w={138}>&nbsp;-2599443&nbsp;&nbsp;7062057</StatusField>
        <StatusIcon $ml={8}>
          <svg width="16" height="22" viewBox="0 0 16 22"><path d="M3 3c3-2 7-2 9 1l-4 10c-3 1-6-2-7-4z" fill="#333" /><circle cx="8" cy="16" r="4" fill="#fff" stroke="#222" strokeWidth="1.4" /><path d="M5 4l7 6" stroke="#fff" /></svg>
        </StatusIcon>
        <StatusLabel $ml={18}>Skala</StatusLabel>
        <StatusField $w={95}>:14453740<FieldBtn><Arrow /></FieldBtn></StatusField>
        <StatusIcon $ml={15}>
          <svg width="18" height="22" viewBox="0 0 18 22"><path d="M5 10V6c0-5 8-5 8 0v4" fill="none" stroke="#777" strokeWidth="2" /><rect x="2" y="9" width="14" height="12" rx="2" fill="#666" /></svg>
        </StatusIcon>
        <StatusLabel $ml={10}>Powiększenie</StatusLabel>
        <StatusField $w={100} $ml={6}>100%<Spin /></StatusField>
        <StatusLabel $ml={11}>Obrót</StatusLabel>
        <StatusField $w={101} $ml={11}>0,0 °<Spin /></StatusField>
        <SmallCheck $ml={8}><Tick s={13} /></SmallCheck>
        <StatusLabel $ml={5}>Renderuj</StatusLabel>
        <StatusIcon $ml={19}>
          <svg width="20" height="20" viewBox="0 0 20 20"><circle cx="10" cy="10" r="8.5" fill="#8a8a8a" /><path d="M1.5 10h17M10 1.5v17M3 5.5h14M3 14.5h14" stroke="#eee" strokeWidth=".8" /><ellipse cx="10" cy="10" rx="4.5" ry="8.5" fill="none" stroke="#eee" strokeWidth=".8" /></svg>
        </StatusIcon>
        <StatusLabel $ml={3} $big>EPSG:2964</StatusLabel>
        <StatusIcon $ml={27}>
          <svg width="22" height="22" viewBox="0 0 22 22"><path d="M11 1c6 0 10 4 10 9s-4 9-8 9l-3 3v-3C5 18 1 15 1 10s4-9 10-9z" fill="#555" /><g fill="#eee"><circle cx="6.5" cy="10" r="1.4" /><circle cx="11" cy="10" r="1.4" /><circle cx="15.5" cy="10" r="1.4" /></g></svg>
        </StatusIcon>
      </StatusBar>
      <Taskbar>
        <Weather>
          <svg width="30" height="24" viewBox="0 0 30 24"><path d="M7 22C2 22 0 18 1 14s4-6 7-5c1-5 6-8 11-6s6 6 6 7c3 1 5 3 5 6s-2 6-6 6z" fill="#a5c8ec" /></svg>
          <WeatherText><span>6°C</span><span>Pochmurnie</span></WeatherText>
        </Weather>
        <svg width="29" height="29" viewBox="0 0 29 29" style={{ flex: "none" }}><rect width="14" height="14" fill="#5cc6f2" /><rect x="15" width="14" height="14" fill="#43b6ee" /><rect y="15" width="14" height="14" fill="#28a7ec" /><rect x="15" y="15" width="14" height="14" fill="#0f97e6" /></svg>
        <TaskSearch>
          <svg width="20" height="20" viewBox="0 0 20 20"><circle cx="8.5" cy="8.5" r="6.5" fill="none" stroke="#ddd" strokeWidth="1.6" /><path d="M13 13l5 5" stroke="#ddd" strokeWidth="1.8" /></svg>
          Wyszukaj
          <BingWrap>
            <svg width="26" height="28" viewBox="0 0 26 28"><path d="M13 1c7 0 12 5 12 12 0 8-6 13-12 13H3l2-4C2 20 1 17 1 13 1 6 6 1 13 1z" fill="#fff" /><path d="M9 6l4 1.5v10l5-3-2.5-1L14 10l7 3v4l-8 5-4-3z" fill="#1d74d8" /></svg>
          </BingWrap>
        </TaskSearch>
        <TaskApp $ml={1}>
          <svg width="30" height="30" viewBox="0 0 30 30"><circle cx="15" cy="14" r="13" fill="#6264a7" /><path d="M8 26l-1 4 8-4z" fill="#6264a7" /><rect x="7" y="9" width="11" height="10" rx="2" fill="#fff" /><path d="M19 12l5-3v10l-5-3z" fill="#fff" /></svg>
        </TaskApp>
        <TaskApp $ml={1}>
          <svg width="30" height="30" viewBox="0 0 30 30"><circle cx="15" cy="16" r="13" fill="#e8522c" /><path d="M19 1c3 3 9 6 9 15L20 9z" fill="#f7b32b" /><circle cx="15" cy="16" r="6.5" fill="#6a3fc4" /><path d="M3 13c3-5 8-6 11-4l-4 5z" fill="#f58a2c" /></svg>
          <RunDot />
        </TaskApp>
        <TaskApp>
          <svg width="32" height="30" viewBox="0 0 32 30"><path d="M2 2h12l3 3h13v25H2z" fill="#f7ca3e" /><path d="M2 2h12l3 3H2z" fill="#e0a524" /><rect x="10" y="19" width="18" height="8" rx="1" fill="#2a8fe0" /></svg>
          <RunDot />
        </TaskApp>
        <TaskApp>
          <svg width="30" height="30" viewBox="0 0 30 30"><circle cx="15" cy="15" r="15" fill="#1ed760" /><path d="M7 10.5c6-1.7 12-1.2 16.5 1.3M8 15.2c5-1.3 10-1 14 1.2M9 19.6c4-1 8-.8 11.5 1" fill="none" stroke="#111" strokeWidth="2.4" strokeLinecap="round" /></svg>
          <RunDot />
        </TaskApp>
        <TaskApp>
          <svg width="34" height="32" viewBox="0 0 34 32"><circle cx="22" cy="11" r="6" fill="#7b83eb" /><path d="M14 13h16v10c0 5-3 7-8 7s-8-2-8-7z" fill="#5059c9" /><rect x="2" y="10" width="17" height="16" rx="2" fill="#4b53bc" /><path d="M6 14h9M10.5 14v9" stroke="#fff" strokeWidth="2" /><circle cx="27" cy="6" r="6" fill="#a4c94a" stroke="#1c2126" /><path d="M24.5 6l2 2 3-4" fill="none" stroke="#fff" strokeWidth="1.4" /></svg>
          <RunDot />
        </TaskApp>
        <TaskApp>
          <QgisLogo s={30} />
          <RunDot />
        </TaskApp>
        <TaskApp $active $w={50} $ml={2}>
          <svg width="28" height="36" viewBox="0 0 28 36"><rect x="3" y="2" width="19" height="22" rx="2" fill="#f2f2f2" /><rect x="7" y="6" width="10" height="10" fill="none" stroke="#e0472e" strokeWidth="1.6" strokeDasharray="2 1.4" /><path d="M15 16h5l-1 20h-2zM14 20l10 2" stroke="#8cc8f0" strokeWidth="1.6" fill="none" /><circle cx="24" cy="17" r="2.4" fill="none" stroke="#3a9ae0" strokeWidth="1.6" /><circle cx="18" cy="31" r="2.4" fill="none" stroke="#3a9ae0" strokeWidth="1.6" /></svg>
          <RunDot $active />
        </TaskApp>
        <Tray>
          <TrayIcon $w={46}><svg width="14" height="9" viewBox="0 0 14 9"><path d="M1.5 7.5L7 2l5.5 5.5" fill="none" stroke="#eee" strokeWidth="1.6" /></svg></TrayIcon>
          <TrayIcon $w={34}><svg width="20" height="18" viewBox="0 0 20 18"><path d="M1 6c5-5 13-5 18 0M4 9.5c3.5-3 8.5-3 12 0M7 13c2-1.5 4-1.5 6 0" fill="none" stroke="#eee" strokeWidth="1.6" /><circle cx="10" cy="16" r="1.6" fill="#eee" /></svg></TrayIcon>
          <TrayIcon $w={24}><svg width="18" height="18" viewBox="0 0 18 18"><path d="M1 6h3l5-4v14l-5-4H1z" fill="none" stroke="#eee" strokeWidth="1.3" /><path d="M12 6c1.5 2 1.5 4 0 6M14.5 4c2.5 3 2.5 7 0 10" fill="none" stroke="#eee" strokeWidth="1.2" /></svg></TrayIcon>
          <TrayIcon $w={38}><svg width="22" height="20" viewBox="0 0 22 20"><rect x="1" y="6" width="18" height="11" rx="2" fill="none" stroke="#eee" strokeWidth="1.4" /><rect x="3" y="8" width="7" height="7" fill="#eee" /><path d="M20 10v3" stroke="#eee" strokeWidth="1.4" /><path d="M6 1v5M3 4l3 3 3-3" stroke="#eee" fill="none" /></svg></TrayIcon>
          <Clock><span>19:57</span><span>08.11.2023</span></Clock>
          <Notify>1</Notify>
        </Tray>
      </Taskbar>
    </Screen>
  );
}
